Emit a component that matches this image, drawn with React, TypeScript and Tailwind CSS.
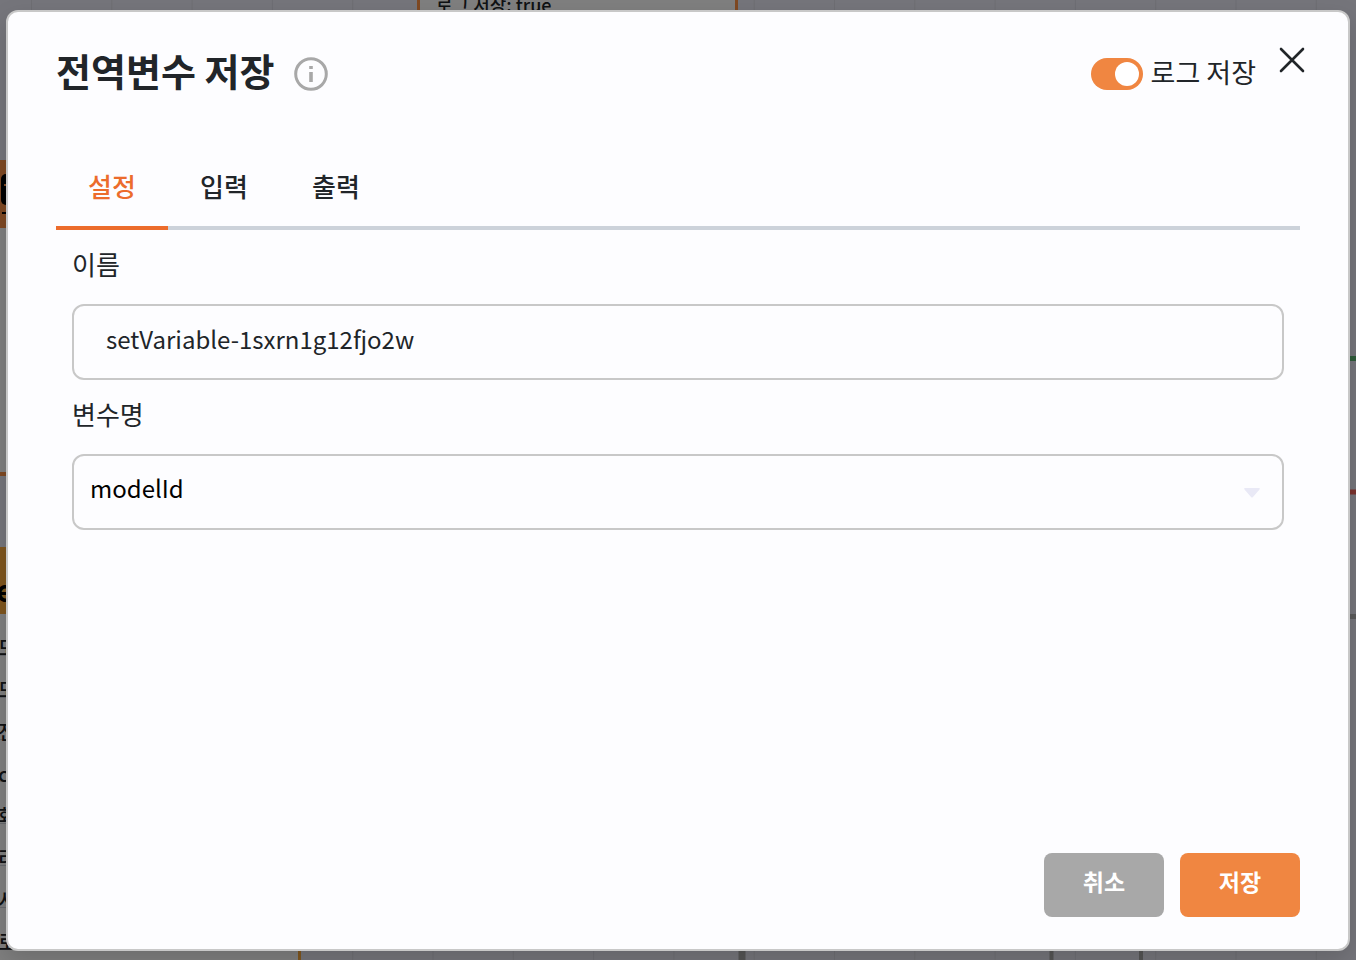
import { useState } from 'react'

const tabs = ['설정', '입력', '출력'];

const modelRows = ['모델', '모드', '전역', 'cron', '화면', '리턴', '시작', '로그'];

function FlowCanvas() {
  return (
    <div aria-hidden="true" className="absolute inset-0 overflow-hidden bg-[#eaeaf6] text-xl text-[#212529]">
      <svg className="absolute inset-0 h-full w-full">
        <defs>
          <pattern id="grid" x="31" y="0" width="80.3" height="960" patternUnits="userSpaceOnUse">
            <path d="M.5 0V960" stroke="#dcdce6" />
          </pattern>
        </defs>
        <rect width="100%" height="100%" fill="url(#grid)" />
        <path d="M1300 358.500H1356" stroke="#5eb874" strokeWidth="5" />
        <path d="M1300 492H1356" stroke="#f4645a" strokeWidth="5" />
        <path d="M1300 616.500H1356" stroke="#b4b4b4" strokeWidth="5" />
        <path d="M742 900V960" stroke="#aaaaaa" strokeWidth="7" />
        <path d="M1051.500 900V960M1141 900V960" stroke="#aaaaaa" strokeWidth="4" />
      </svg>

      <div className="absolute -top-12 left-[417px] h-24 w-[321px] border-x-3 border-[#ff9246] bg-white px-4 pt-9 text-lg leading-8 font-medium">
        로그 저장: true
      </div>

      <div className="absolute top-[160px] -left-[240px] w-[320px] border-b-4 border-[#ff9246] bg-white">
        <div className="h-[68px] bg-[#ff9246] pt-[14px] pl-[241px]">
          <svg className="h-10 w-8" viewBox="0 0 32 40">
            <rect width="32" height="31" rx="5" />
            <path d="M3 10H12V12H3Z" fill="#ff9246" />
            <path d="M1 38H31V40H1Z" />
          </svg>
        </div>
        <div className="h-[244px]" />
      </div>

      <div className="absolute top-[547px] -left-2 w-[309px] border-r-3 border-[#ffac3c] bg-white">
        <div className="h-[67px] bg-[#ffac3c] pt-6 pl-1 text-3xl font-bold text-black">endpoint</div>
        {modelRows.map((row, i) => (
          <div key={i} className="h-[42px] border-b border-gray-300 pt-4 pl-[6px] leading-9 font-medium">{row}</div>
        ))}
        <div className="h-20" />
      </div>
    </div>
  )
}

function InfoIcon() {
  return (
    <svg className="h-[34px] w-[34px]" viewBox="0 0 34 34" fill="none">
      <circle cx="17" cy="17" r="15.300" stroke="#a8a8a8" strokeWidth="3" />
      <path d="M15.200 9H18.800V12H15.200ZM15.200 15H18.800V25H15.200Z" fill="#a8a8a8" />
    </svg>
  )
}

export default function App() {

  const [activeTab, setActiveTab] = useState(0);
  const [saveLog, setSaveLog] = useState(true);
  const [name, setName] = useState('setVariable-1sxrn1g12fjo2w');
  const [variable, setVariable] = useState('modelId');

  return (
    <div className="relative h-screen overflow-hidden font-['Noto_Sans_CJK_KR',sans-serif]">
      <FlowCanvas />
      <div className="relative flex h-full bg-black/50 px-[6px] pt-[10px] pb-[9px]">
        <div role="dialog" aria-labelledby="modal-headline" className="flex flex-1 flex-col rounded-xl border-2 border-[#c8c8c8] bg-[#fdfdff] px-12 pb-8 text-[26px] text-[#212529] shadow-[0_10px_24px_rgba(0,0,0,0.15)]">
          <div className="flex items-start justify-between pt-8">
            <div className="flex items-center gap-5">
              <h1 id="modal-headline" className="pb-1 text-[38px] leading-13 font-bold">전역변수 저장</h1>
              <button type="button" aria-label="정보" className="mt-1">
                <InfoIcon />
              </button>
            </div>
            <div className="-mr-1 flex items-start gap-6">
              <label className="flex items-start gap-2 text-[27px] leading-14">
                <input
                  type="checkbox"
                  role="switch"
                  checked={saveLog}
                  onChange={() => setSaveLog(!saveLog)}
                  className="peer sr-only" />
                <span className="mt-[14px] flex h-8 w-[52px] items-center rounded-full bg-gray-400 px-1 peer-checked:justify-end peer-checked:bg-[#f08641]">
                  <span className="h-6 w-6 rounded-full bg-white" />
                </span>
                로그 저장
              </label>
              <button type="button" aria-label="닫기" className="mt-1">
                <svg className="h-6 w-6 overflow-visible" viewBox="0 0 24 24" fill="none" stroke="#212529">
                  <path strokeLinecap="round" strokeWidth="2.600" d="M1 1L23 23M23 1L1 23" />
                </svg>
              </button>
            </div>
          </div>

          <div role="tablist" className="mt-12 flex border-b-4 border-[#ccd2da] font-medium">
            {tabs.map((tab, i) => (
              <button
                key={tab}
                type="button"
                role="tab"
                aria-selected={activeTab === i}
                onClick={() => setActiveTab(i)}
                className={`-mb-1 w-28 border-b-4 pt-4 pb-[18px] leading-11 ${activeTab === i ? 'border-[#ec6c2c] text-[#ec6c2c]' : 'border-transparent'}`}>
                {tab}
              </button>
            ))}
          </div>

          <div className="flex-1 px-4">
            <label htmlFor="name" className="block pt-[14px] pb-5 leading-10">이름</label>
            <input
              id="name"
              type="text"
              value={name}
              onChange={(e) => setName(e.target.value)}
              className="block h-[76px] w-full rounded-xl border-2 border-[#c8c8c8] px-8 pb-2 text-2xl" />
            <label htmlFor="variable" className="block pt-[14px] pb-5 leading-10">변수명</label>
            <div className="relative">
              <select
                id="variable"
                value={variable}
                onChange={(e) => setVariable(e.target.value)}
                className="block h-[76px] w-full appearance-none rounded-xl border-2 border-[#c8c8c8] px-4 pb-2 text-2xl text-black">
                <option>modelId</option>
              </select>
              <svg className="pointer-events-none absolute top-[34px] right-6 h-[10px] w-4" viewBox="0 0 16 10" fill="#e9e9f6">
                <path d="M1 0H15Q16.500 .5 15.500 1.600L9 9Q8 10 7 9L.5 1.600Q-.5 .5 1 0Z" />
              </svg>
            </div>
          </div>

          <div className="flex justify-end gap-4 text-[23px] font-bold text-white">
            <button type="button" className="h-16 w-[120px] rounded-lg bg-[#a8a8a8] pb-2">취소</button>
            <button type="button" className="h-16 w-[120px] rounded-lg bg-[#f08641] pb-2">저장</button>
          </div>
        </div>
      </div>
    </div>
  )
}
